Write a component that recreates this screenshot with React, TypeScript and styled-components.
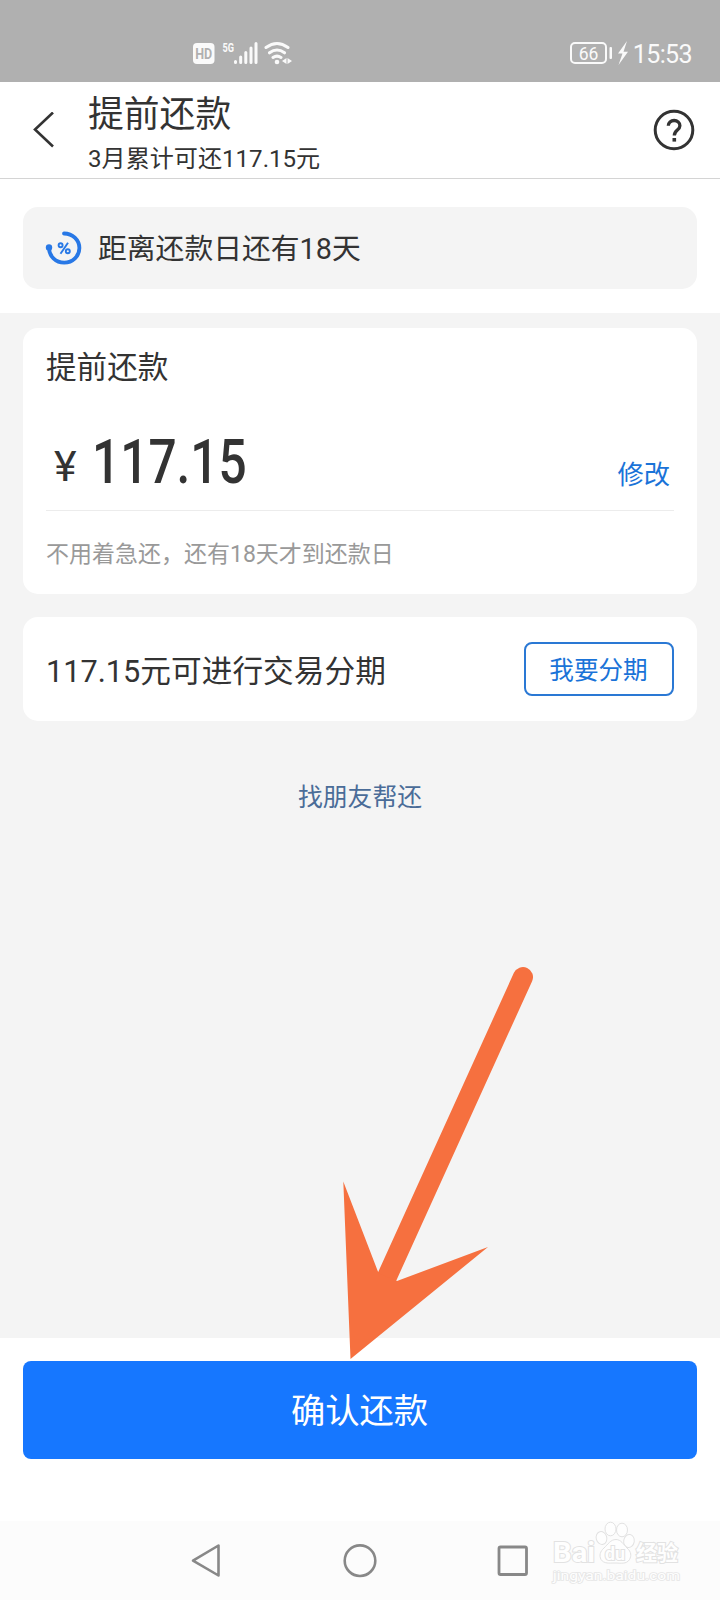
import React from 'react';
import styled, { createGlobalStyle } from 'styled-components';

const GlobalStyle = createGlobalStyle`
  * { box-sizing: border-box; }
  body {
    margin: 0;
    background: #fff;
    font-family: Roboto, "Noto Sans CJK SC", sans-serif;
    color: #333;
  }
  svg { display: block; }
`;

const Screen = styled.div`
  position: relative;
  width: 720px;
  height: 1600px;
  display: flex;
  flex-direction: column;
  background: #fff;
  overflow: hidden;
  white-space: nowrap;
`;

const StatusBar = styled.div`
  height: 82px;
  flex: none;
  padding: 23px 28px 0 192px;
  display: flex;
  align-items: center;
  justify-content: space-between;
  background: #b0b0b0;
  color: #fafafa;
`;

const StatusGroup = styled.div`
  display: flex;
  align-items: center;
`;

const Clock = styled.span`
  margin-left: 4px;
  padding-top: 4px;
  font-size: 25px;
  line-height: 30px;
  letter-spacing: -0.6px;
`;

const Header = styled.header`
  height: 97px;
  flex: none;
  display: flex;
  align-items: center;
  padding: 0 25px 0 32px;
  border-bottom: 1px solid #d4d4d4;
`;

const Titles = styled.div`
  flex: 1;
  margin-left: 33px;
  padding-top: 8px;
`;

const Title = styled.h1`
  margin: 0;
  font-size: 35.8px;
  line-height: 46px;
  font-weight: 400;
`;

const Subtitle = styled.div`
  font-size: 24.1px;
  line-height: 34px;
  margin-top: 4px;
`;

const NoticeArea = styled.section`
  flex: none;
  height: 134px;
  padding: 28px 23px 24px;
`;

const Notice = styled.div`
  height: 82px;
  display: flex;
  align-items: center;
  padding: 0 0 3px 22px;
  gap: 15px;
  border-radius: 15px;
  background: #f4f4f4;
  font-size: 28.8px;

  svg { margin-top: 3px; }
`;

const Content = styled.main`
  flex: none;
  height: 1025px;
  padding: 15px 23px 0;
  background: #f4f4f4;
`;

const AmountCard = styled.section`
  height: 266px;
  padding: 17px 23px 0;
  border-radius: 15px;
  background: #fff;
`;

const CardTitle = styled.h2`
  margin: 0;
  font-size: 30.6px;
  line-height: 45px;
  font-weight: 400;
`;

const AmountRow = styled.div`
  height: 121px;
  display: flex;
  align-items: flex-end;
  border-bottom: 1px solid #ececec;
`;

const Currency = styled.span`
  width: 46px;
  padding-left: 8px;
  font-size: 43px;
  line-height: 50px;
  margin-bottom: 19px;
`;

const Amount = styled.span`
  flex: 1;
  font-size: 62px;
  line-height: 72px;
  font-weight: 500;
  margin-bottom: 12px;
  transform: scaleX(0.8);
  transform-origin: left center;
`;

const EditLink = styled.a`
  color: #1a73d8;
  font-size: 26.3px;
  line-height: 36px;
  margin: 0 4px 17px 0;
`;

const Hint = styled.p`
  margin: 27px 0 0;
  font-size: 23px;
  line-height: 34px;
  color: #999;
`;

const InstallmentCard = styled.section`
  height: 104px;
  margin-top: 23px;
  padding: 0 23px;
  display: flex;
  align-items: center;
  justify-content: space-between;
  border-radius: 15px;
  background: #fff;
  font-size: 30.7px;
`;

const InstallmentText = styled.span`
  padding-bottom: 2px;
`;

const OutlineButton = styled.button`
  width: 150px;
  height: 54px;
  padding: 0 1px 2px 0;
  border: 2px solid #2a78d4;
  border-radius: 8px;
  background: #fff;
  color: #1a73d8;
  font-family: inherit;
  font-size: 24.6px;
`;

const FriendLink = styled.a`
  display: block;
  margin-top: 59px;
  text-align: center;
  font-size: 24.8px;
  line-height: 36px;
  color: #4a6c98;
`;

const ActionBar = styled.footer`
  flex: none;
  height: 183px;
  padding: 23px 23px 0;
`;

const ConfirmButton = styled.button`
  width: 100%;
  height: 98px;
  padding: 0 1px 5px 0;
  border: 0;
  border-radius: 8px;
  background: #1677ff;
  color: #fff;
  font-family: inherit;
  font-size: 34.3px;
`;

const NavBar = styled.nav`
  flex: 1;
  display: flex;
  align-items: flex-start;
  padding: 22px 0 0 190px;
  gap: 119px;
  background: #fcfcfc;
`;

const ArrowOverlay = styled.svg`
  position: absolute;
  left: 330px;
  top: 960px;
`;

const Watermark = styled.svg`
  position: absolute;
  left: 545px;
  top: 1518px;

  text { paint-order: stroke; }
`;

const StatusIcons = () => (
  <svg width="102" height="30" viewBox="192 38 102 30" fill="#fafafa">
    <rect x="193" y="43" width="21.5" height="21" rx="4" />
    <text x="203.7" y="59.300" fontSize="15" fontWeight="700" textAnchor="middle" fill="#b0b0b0" textLength="17" lengthAdjust="spacingAndGlyphs">HD</text>
    <text x="222.500" y="52" fontSize="13" fontWeight="700" textLength="11.500" lengthAdjust="spacingAndGlyphs">5G</text>
    <g stroke="#fafafa" strokeWidth="3" strokeLinecap="round">
      <path d="M235.5 61.5v1M240.7 57v5.500M245.800 52.500v10M251 48v14.500M256 43.500v19" />
    </g>
    <g fill="none" stroke="#fafafa" strokeWidth="3" strokeLinecap="round">
      <path d="M266 47.500Q277 39.500 288 47.500M269.500 52.800Q277 47.200 284.500 52.800M273 57.500Q277 54.800 281 57.500" />
    </g>
    <circle cx="277" cy="62" r="2.300" />
    <path d="M286.500 58v6l-4.500-3zM287.500 58v6l4.500-3z" />
  </svg>
);

const BatteryIcon = () => (
  <svg width="60" height="30" viewBox="568 38 60 30" fill="#fafafa">
    <rect x="570" y="43" width="35" height="20" rx="4" fill="none" stroke="#fafafa" strokeWidth="2" />
    <rect x="608.500" y="47" width="2.500" height="12" rx="1" />
    <text x="587.500" y="59.500" fontSize="17.500" textAnchor="middle">66</text>
    <path d="M626 41L617 53.500h4.500L617.500 65L627 51.800h-4.500z" />
  </svg>
);

const BackIcon = () => (
  <svg width="23" height="37" viewBox="32 112 23 37" fill="none" stroke="#333" strokeWidth="2.600">
    <path d="M53 112.500L35 129.500L53 146.500" />
  </svg>
);

const HelpIcon = () => (
  <svg width="42" height="42" viewBox="0 0 42 42" fill="none" stroke="#333">
    <circle cx="21" cy="21" r="18.800" strokeWidth="3" />
    <path d="M15.300 16.800c0-3.300 2.600-5.300 5.800-5.300s5.800 2 5.800 5.200c0 4.300-5.600 4.300-5.600 9.800" strokeWidth="3.300" />
    <rect x="19.500" y="29" width="3.600" height="3.600" fill="#333" stroke="none" />
  </svg>
);

const PercentIcon = () => (
  <svg width="38" height="36" viewBox="45 230 38 36">
    <path d="M64 233.500A15.200 14.600 0 1 1 49 248" fill="none" stroke="#2878e6" strokeWidth="3.800" strokeLinecap="round" />
    <circle cx="49" cy="247.500" r="3.200" fill="#2878e6" />
    <g fill="none" stroke="#2878e6" strokeWidth="1.900">
      <circle cx="60.600" cy="245.300" r="2" />
      <circle cx="67.800" cy="251.200" r="2" />
      <path d="M68 242.800L60.500 253.700" />
    </g>
  </svg>
);

const App = () => (
  <>
    <GlobalStyle />
    <Screen>
      <StatusBar>
        <StatusGroup><StatusIcons /></StatusGroup>
        <StatusGroup>
          <BatteryIcon />
          <Clock>15:53</Clock>
        </StatusGroup>
      </StatusBar>
      <Header>
        <BackIcon />
        <Titles>
          <Title>提前还款</Title>
          <Subtitle>3月累计可还117.15元</Subtitle>
        </Titles>
        <HelpIcon />
      </Header>
      <NoticeArea>
        <Notice>
          <PercentIcon />
          <span>距离还款日还有18天</span>
        </Notice>
      </NoticeArea>
      <Content>
        <AmountCard>
          <CardTitle>提前还款</CardTitle>
          <AmountRow>
            <Currency>¥</Currency>
            <Amount>117.15</Amount>
            <EditLink>修改</EditLink>
          </AmountRow>
          <Hint>不用着急还，还有18天才到还款日</Hint>
        </AmountCard>
        <InstallmentCard>
          <InstallmentText>117.15元可进行交易分期</InstallmentText>
          <OutlineButton>我要分期</OutlineButton>
        </InstallmentCard>
        <FriendLink>找朋友帮还</FriendLink>
      </Content>
      <ActionBar>
        <ConfirmButton>确认还款</ConfirmButton>
      </ActionBar>
      <NavBar>
        <svg width="30" height="34" viewBox="0 0 30 34" fill="none" stroke="#888" strokeWidth="2.600" strokeLinejoin="round">
          <path d="M28.500 2.500v30L3 17.700z" />
        </svg>
        <svg width="38" height="36" viewBox="0 0 38 36" fill="none" stroke="#888" strokeWidth="2.600">
          <circle cx="21" cy="17.700" r="15.300" />
        </svg>
        <svg width="34" height="34" viewBox="0 0 34 34" fill="none" stroke="#888" strokeWidth="2.800">
          <rect x="3" y="4" width="27.500" height="27.500" rx="1.500" />
        </svg>
      </NavBar>
      <ArrowOverlay width="210" height="405" viewBox="330 960 210 405">
        <path d="M523 977L386 1279" stroke="#f6703f" strokeWidth="20" strokeLinecap="round" />
        <path d="M350.500 1359L343.300 1181.500L378.500 1273L397 1281L488 1247z" fill="#f6703f" />
      </ArrowOverlay>
      <Watermark width="150" height="72" viewBox="545 1518 150 72" fill="#fefefe" stroke="#e2e2e2" strokeWidth="1">
        <text x="553" y="1562" fontSize="28.500" fontWeight="700" textLength="42" lengthAdjust="spacingAndGlyphs" strokeWidth="2">Bai</text>
        <ellipse cx="601.500" cy="1538" rx="5.300" ry="6.500" transform="rotate(-15 601.500 1538)" />
        <ellipse cx="610.500" cy="1529" rx="5.500" ry="6.800" />
        <ellipse cx="622" cy="1530" rx="5.500" ry="6.800" />
        <ellipse cx="629" cy="1541" rx="5.300" ry="6.500" transform="rotate(10 629 1541)" />
        <path d="M616 1539.500c5 0 7.500 5 11 8.500c4.500 4 4.500 8 2.500 11.500c-3 5-9 3.500-14.500 3.500s-11 1-14-3.500c-2-4-1-8 3-11.500c4-3.500 6.500-8.500 12-8.500z" />
        <text x="605" y="1559.500" fontSize="18" fontWeight="700" textLength="20" lengthAdjust="spacingAndGlyphs" strokeWidth="2">du</text>
        <text x="636" y="1560" fontSize="21" fontWeight="700" textLength="42" lengthAdjust="spacingAndGlyphs" strokeWidth="2">经验</text>
        <text x="553" y="1580" fontSize="13" textLength="127" lengthAdjust="spacingAndGlyphs" stroke="#e6e6e6" strokeWidth="1.600">jingyan.baidu.com</text>
      </Watermark>
    </Screen>
  </>
);

export default App;
